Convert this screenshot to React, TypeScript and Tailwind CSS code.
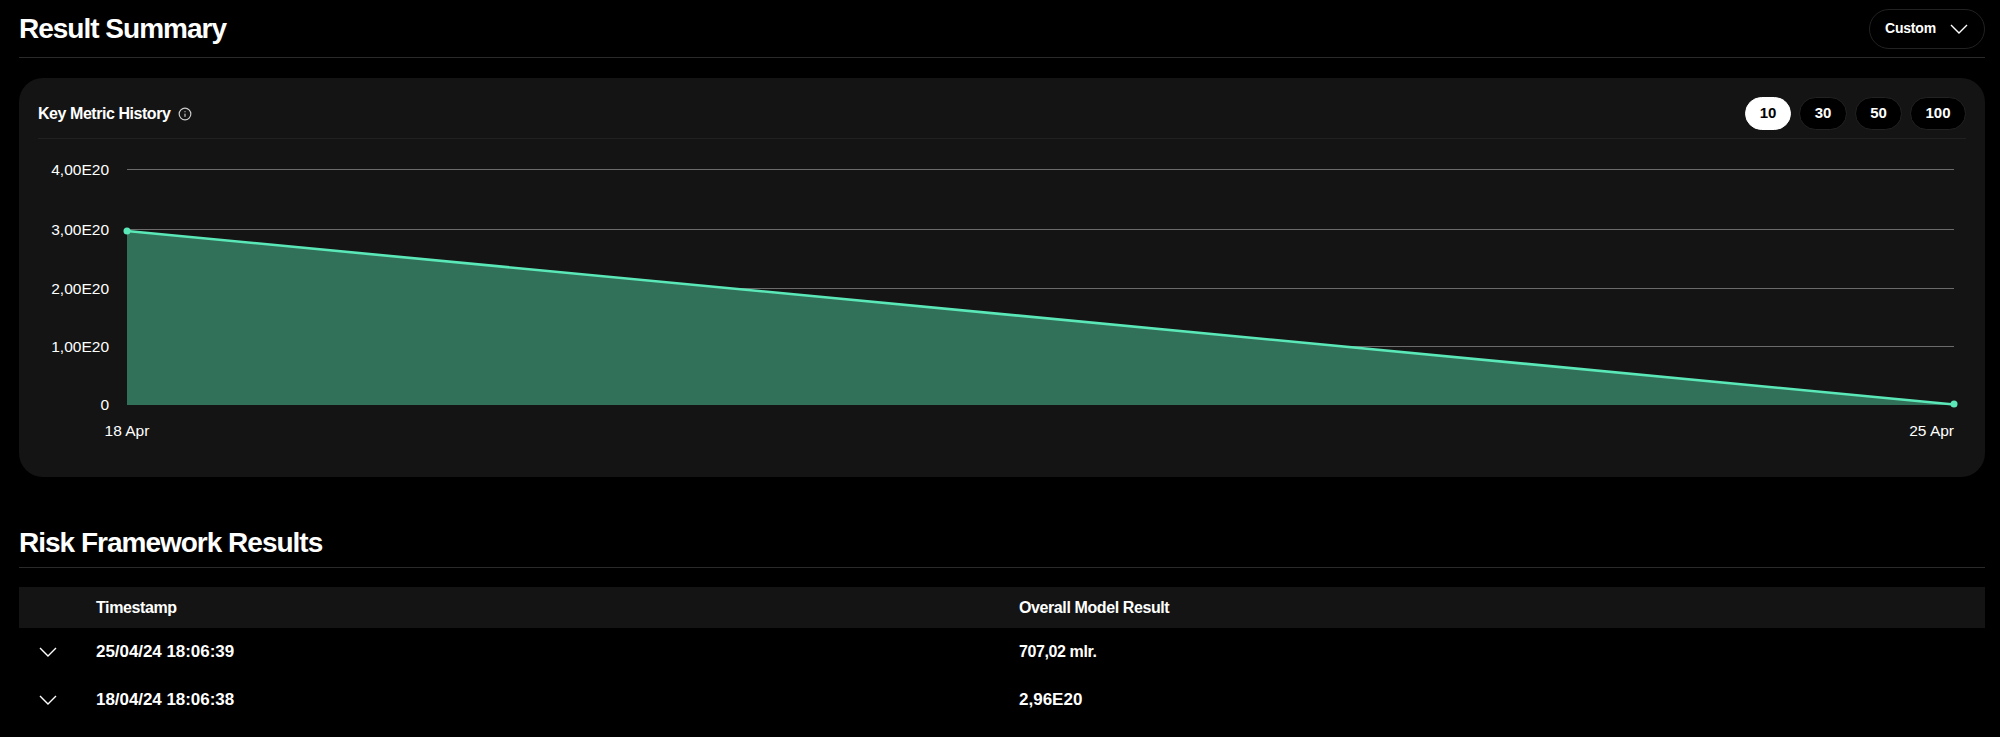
import React from 'react';
import { Info } from 'lucide-react';

const yTicks = [
    { label: '4,00E20', y: 30.5 },
    { label: '3,00E20', y: 90.5 },
    { label: '2,00E20', y: 149.5 },
    { label: '1,00E20', y: 207.5 },
    { label: '0', y: 265.5 },
];

const ranges = [
    { label: '10', width: 'w-[46px]', active: true },
    { label: '30', width: 'w-[48px]', active: false },
    { label: '50', width: 'w-[47px]', active: false },
    { label: '100', width: 'w-[56px]', active: false },
];

const rows = [
    { time: '25/04/24 18:06:39', result: '707,02 mlr.', resultClass: 'text-[16px] tracking-[-0.4px]' },
    { time: '18/04/24 18:06:38', result: '2,96E20', resultClass: 'text-[17px] tracking-[0px]' },
];

// lucide's chevron is too narrow here, the reference one is wide and flat
const WideChevron = () => (
    <svg width="18" height="10" viewBox="0 0 18 10" fill="none" stroke="currentColor" strokeWidth="1.4" className="block">
        <polyline points="1,1 9,9 17,1" />
    </svg>
);

const KeyMetricChart = () => (
    <svg width="1928" height="338" className="block font-['Liberation_Sans',sans-serif]">
        {yTicks.map((tick) => (
            <g key={tick.label}>
                <line x1="89" x2="1916" y1={tick.y} y2={tick.y} stroke="#6b6b6b" strokeWidth="1.2" />
                <text x="71" y={tick.y + 5.5} textAnchor="end" fontSize="15.5" fill="#fff">
                    {tick.label}
                </text>
            </g>
        ))}
        <polygon points="89,92 1916,265.5 1916,266 89,266" fill="#327159" />
        <line x1="89" y1="92" x2="1916" y2="265.5" stroke="#5be8b8" strokeWidth="2.6" />
        <circle cx="89" cy="92" r="3.5" fill="#5be8b8" />
        <circle cx="1916" cy="265" r="3.5" fill="#5be8b8" />
        <text x="89" y="297" textAnchor="middle" fontSize="15.5" fill="#fff">18 Apr</text>
        <text x="1916" y="297" textAnchor="end" fontSize="15.5" fill="#fff">25 Apr</text>
    </svg>
);

export default function App() {
    return (
        <div className="min-h-[737px] bg-black pl-[19px] pr-[15px] text-white font-['Liberation_Sans',sans-serif] overflow-hidden">
            {/* Result Summary */}
            <div className="flex h-[58px] items-center justify-between border-b border-[#2a2a2a] pb-[8px] pt-[8px]">
                <h1 className="text-[28px] font-bold tracking-[-1px] leading-none">Result Summary</h1>
                <button className="flex h-[40px] w-[116px] items-center justify-between rounded-full border border-[#222] pl-[15px] pr-[16px] text-[14px] font-bold tracking-[-0.2px]">
                    Custom
                    <WideChevron />
                </button>
            </div>

            <div className="mt-[20px] h-[399px] rounded-[24px] bg-[#141414] px-[19px] pt-[19px]">
                <div className="flex items-center justify-between border-b border-[#212121] pb-[8px]">
                    <div className="flex items-center gap-[8px]">
                        <span className="text-[16px] font-bold tracking-[-0.45px]">Key Metric History</span>
                        <Info size={14} strokeWidth={2} className="text-[#ccc]" />
                    </div>
                    <div className="flex gap-[8px]">
                        {ranges.map((range) => (
                            <button
                                key={range.label}
                                className={`flex h-[33px] items-center justify-center rounded-full border text-[15px] font-bold ${range.width} ${
                                    range.active ? 'border-white bg-white text-black' : 'border-[#222] bg-black text-white'
                                }`}
                            >
                                {range.label}
                            </button>
                        ))}
                    </div>
                </div>
                <KeyMetricChart />
            </div>

            {/* Risk Framework Results */}
            <div className="mt-[47px] flex h-[44px] items-center border-b border-[#2a2a2a] pb-[6px]">
                <h2 className="text-[28px] font-bold tracking-[-1px] leading-none">Risk Framework Results</h2>
            </div>

            <div className="mt-[19px] text-[16px] font-bold tracking-[-0.4px]">
                <div className="flex h-[41px] items-center bg-[#141414]">
                    <div className="w-[77px]" />
                    <div className="w-[923px]">Timestamp</div>
                    <div>Overall Model Result</div>
                </div>
                {rows.map((row) => (
                    <div key={row.time} className="flex h-[48px] items-center">
                        <div className="w-[77px] pl-[20px]">
                            <WideChevron />
                        </div>
                        <div className="w-[923px] text-[17px] tracking-[-0.05px]">{row.time}</div>
                        <div className={row.resultClass}>{row.result}</div>
                    </div>
                ))}
            </div>
        </div>
    );
}
